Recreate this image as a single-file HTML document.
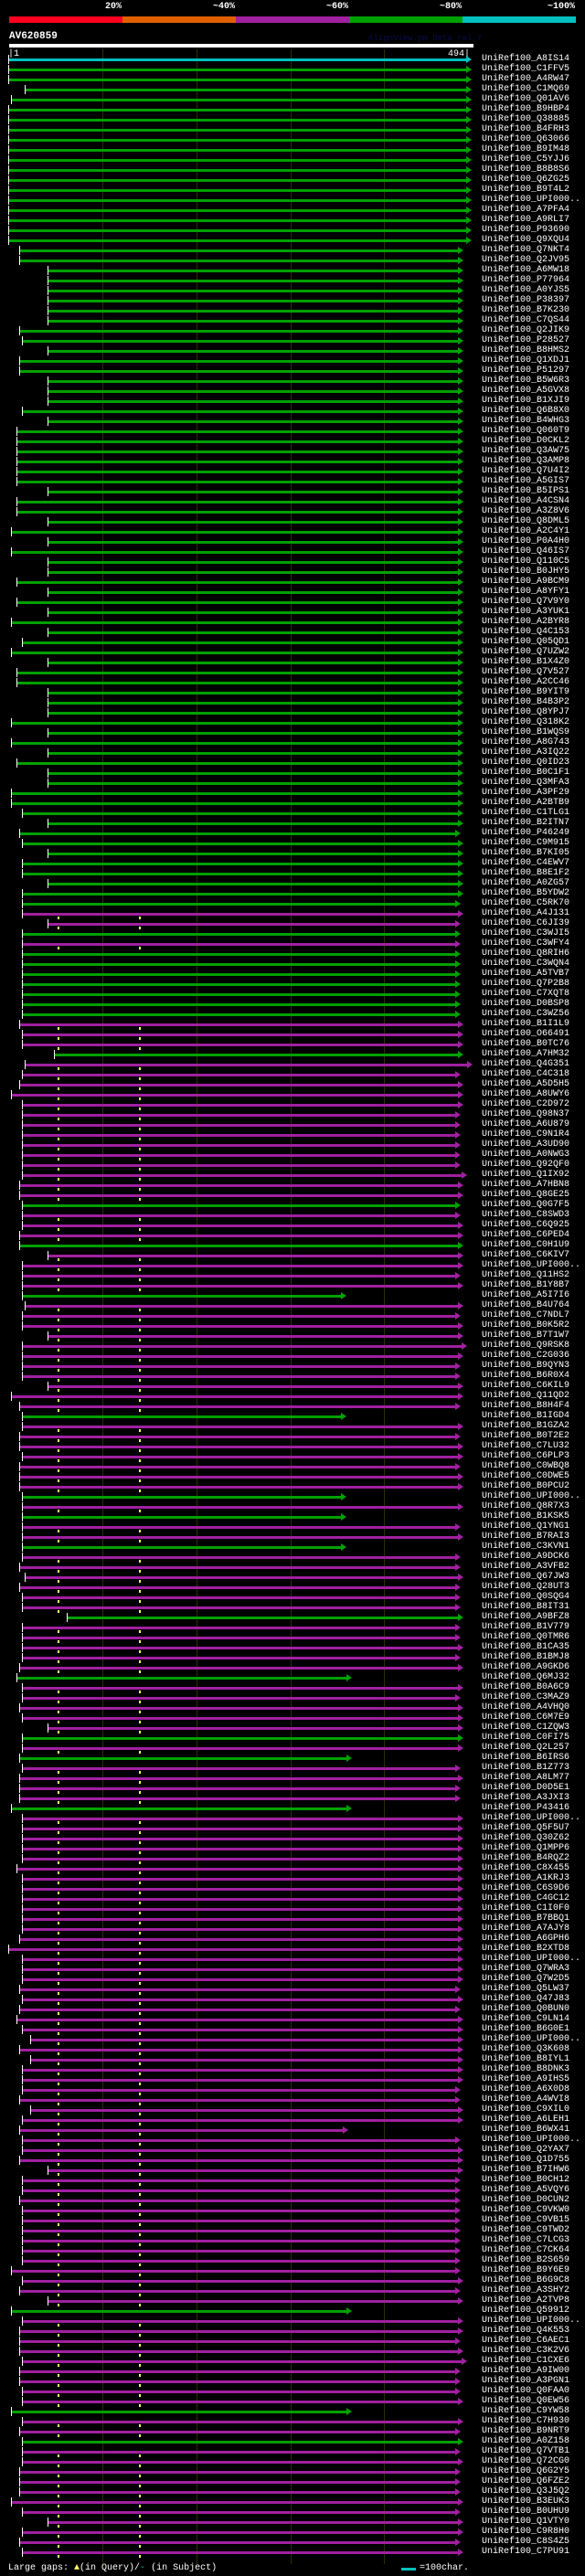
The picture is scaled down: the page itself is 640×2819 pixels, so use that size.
<!DOCTYPE html>
<html><head><meta charset="utf-8"><style>
body{margin:0;background:#000;width:640px;height:2819px;position:relative;overflow:hidden;font-family:"Liberation Mono",monospace}
.a{position:absolute}
.gl{position:absolute;top:54px;height:2752px;width:1px;background:#2e2e00}
.r{position:absolute;left:0;width:640px;height:11px}
.r i{position:absolute;top:5px;height:3px;left:25px;width:476px;background:currentColor}
.r i::before{content:"";position:absolute;left:-1px;top:-4px;width:1px;height:10px;background:#fff}
.r i::after{content:"";position:absolute;left:100%;top:-3px;border-left:6px solid currentColor;border-top:4.5px solid transparent;border-bottom:4.5px solid transparent}
.r span{position:absolute;left:527px;top:0;font-size:10px;line-height:11px;color:#fff;white-space:nowrap}
.g{color:#00a000}.p{color:#a020a0}.c{color:#00c0c0}
.p::before,.p::after{content:"";position:absolute;top:9px;width:2px;height:3px;background:#ffff66}
.p::before{left:63px}.p::after{left:152px}
.pc{font-size:10px;font-weight:bold;color:#fff;line-height:12px}
</style></head><body>
<div class="a pc" style="left:100px;top:2px;width:33px;text-align:right">20%</div>
<div class="a pc" style="left:200px;top:2px;width:57px;text-align:right">~40%</div>
<div class="a pc" style="left:320px;top:2px;width:61px;text-align:right">~60%</div>
<div class="a pc" style="left:440px;top:2px;width:65px;text-align:right">~80%</div>
<div class="a pc" style="left:560px;top:2px;width:69px;text-align:right">~100%</div>
<div class="a" style="left:10px;top:18px;width:124px;height:7px;background:#ff0020"></div>
<div class="a" style="left:134px;top:18px;width:124px;height:7px;background:#e06000"></div>
<div class="a" style="left:258px;top:18px;width:124px;height:7px;background:#a020a0"></div>
<div class="a" style="left:382px;top:18px;width:124px;height:7px;background:#00a000"></div>
<div class="a" style="left:506px;top:18px;width:124px;height:7px;background:#00c0c0"></div>
<div class="a pc" style="left:10px;top:34px;font-size:11px">AV620859</div>
<div class="a" style="left:403px;top:37px;font-size:9px;color:#0a0a4a">AlignView.pm Beta rel.7</div>
<div class="a" style="left:10px;top:48px;width:508px;height:4px;background:#fff"></div>
<div class="a" style="left:9px;top:54px;font-size:10px;color:#fff;line-height:12px">|1</div>
<div class="a" style="left:490px;top:54px;font-size:10px;color:#fff;line-height:12px">494|</div>
<div class="gl" style="left:112px"></div><div class="gl" style="left:215px"></div><div class="gl" style="left:318px"></div><div class="gl" style="left:420px"></div>

<div class="r c" style="top:59px"><i style="left:10px;width:500px"></i><span>UniRef100_A8IS14</span></div>
<div class="r g" style="top:70px"><i style="left:10px;width:500px"></i><span>UniRef100_C1FFV5</span></div>
<div class="r g" style="top:81px"><i style="left:10px;width:500px"></i><span>UniRef100_A4RW47</span></div>
<div class="r g" style="top:92px"><i style="left:28px;width:482px"></i><span>UniRef100_C1MQ69</span></div>
<div class="r g" style="top:103px"><i style="left:13px;width:497px"></i><span>UniRef100_Q01AV6</span></div>
<div class="r g" style="top:114px"><i style="left:10px;width:500px"></i><span>UniRef100_B9HBP4</span></div>
<div class="r g" style="top:125px"><i style="left:10px;width:500px"></i><span>UniRef100_Q38885</span></div>
<div class="r g" style="top:136px"><i style="left:10px;width:500px"></i><span>UniRef100_B4FRH3</span></div>
<div class="r g" style="top:147px"><i style="left:10px;width:500px"></i><span>UniRef100_Q63066</span></div>
<div class="r g" style="top:158px"><i style="left:10px;width:500px"></i><span>UniRef100_B9IM48</span></div>
<div class="r g" style="top:169px"><i style="left:10px;width:500px"></i><span>UniRef100_C5YJJ6</span></div>
<div class="r g" style="top:180px"><i style="left:10px;width:500px"></i><span>UniRef100_B8B8S6</span></div>
<div class="r g" style="top:191px"><i style="left:10px;width:500px"></i><span>UniRef100_Q6ZG25</span></div>
<div class="r g" style="top:202px"><i style="left:10px;width:500px"></i><span>UniRef100_B9T4L2</span></div>
<div class="r g" style="top:213px"><i style="left:10px;width:500px"></i><span>UniRef100_UPI000..</span></div>
<div class="r g" style="top:224px"><i style="left:10px;width:500px"></i><span>UniRef100_A7PFA4</span></div>
<div class="r g" style="top:235px"><i style="left:10px;width:500px"></i><span>UniRef100_A9RLI7</span></div>
<div class="r g" style="top:246px"><i style="left:10px;width:500px"></i><span>UniRef100_P93690</span></div>
<div class="r g" style="top:257px"><i style="left:10px;width:500px"></i><span>UniRef100_Q9XQU4</span></div>
<div class="r g" style="top:268px"><i style="left:22px;width:479px"></i><span>UniRef100_Q7NKT4</span></div>
<div class="r g" style="top:279px"><i style="left:22px;width:479px"></i><span>UniRef100_Q2JV95</span></div>
<div class="r g" style="top:290px"><i style="left:53px;width:448px"></i><span>UniRef100_A6MW18</span></div>
<div class="r g" style="top:301px"><i style="left:53px;width:448px"></i><span>UniRef100_P77964</span></div>
<div class="r g" style="top:312px"><i style="left:53px;width:448px"></i><span>UniRef100_A0YJS5</span></div>
<div class="r g" style="top:323px"><i style="left:53px;width:448px"></i><span>UniRef100_P38397</span></div>
<div class="r g" style="top:334px"><i style="left:53px;width:448px"></i><span>UniRef100_B7K230</span></div>
<div class="r g" style="top:345px"><i style="left:53px;width:448px"></i><span>UniRef100_C7QS44</span></div>
<div class="r g" style="top:356px"><i style="left:22px;width:479px"></i><span>UniRef100_Q2JIK9</span></div>
<div class="r g" style="top:367px"><i></i><span>UniRef100_P28527</span></div>
<div class="r g" style="top:378px"><i style="left:53px;width:448px"></i><span>UniRef100_B8HMS2</span></div>
<div class="r g" style="top:389px"><i style="left:22px;width:479px"></i><span>UniRef100_Q1XDJ1</span></div>
<div class="r g" style="top:400px"><i style="left:22px;width:479px"></i><span>UniRef100_P51297</span></div>
<div class="r g" style="top:411px"><i style="left:53px;width:448px"></i><span>UniRef100_B5W6R3</span></div>
<div class="r g" style="top:422px"><i style="left:53px;width:448px"></i><span>UniRef100_A5GVX8</span></div>
<div class="r g" style="top:433px"><i style="left:53px;width:448px"></i><span>UniRef100_B1XJI9</span></div>
<div class="r g" style="top:444px"><i></i><span>UniRef100_Q6B8X0</span></div>
<div class="r g" style="top:455px"><i style="left:53px;width:448px"></i><span>UniRef100_B4WHG3</span></div>
<div class="r g" style="top:466px"><i style="left:19px;width:482px"></i><span>UniRef100_Q060T9</span></div>
<div class="r g" style="top:477px"><i style="left:19px;width:482px"></i><span>UniRef100_D0CKL2</span></div>
<div class="r g" style="top:488px"><i style="left:19px;width:482px"></i><span>UniRef100_Q3AW75</span></div>
<div class="r g" style="top:499px"><i style="left:19px;width:482px"></i><span>UniRef100_Q3AMP8</span></div>
<div class="r g" style="top:510px"><i style="left:19px;width:482px"></i><span>UniRef100_Q7U4I2</span></div>
<div class="r g" style="top:521px"><i style="left:19px;width:482px"></i><span>UniRef100_A5GIS7</span></div>
<div class="r g" style="top:532px"><i style="left:53px;width:448px"></i><span>UniRef100_B5IPS1</span></div>
<div class="r g" style="top:543px"><i style="left:19px;width:482px"></i><span>UniRef100_A4CSN4</span></div>
<div class="r g" style="top:554px"><i style="left:19px;width:482px"></i><span>UniRef100_A3Z8V6</span></div>
<div class="r g" style="top:565px"><i style="left:53px;width:448px"></i><span>UniRef100_Q8DML5</span></div>
<div class="r g" style="top:576px"><i style="left:13px;width:488px"></i><span>UniRef100_A2C4Y1</span></div>
<div class="r g" style="top:587px"><i style="left:53px;width:448px"></i><span>UniRef100_P0A4H0</span></div>
<div class="r g" style="top:598px"><i style="left:13px;width:488px"></i><span>UniRef100_Q46IS7</span></div>
<div class="r g" style="top:609px"><i style="left:53px;width:448px"></i><span>UniRef100_Q110C5</span></div>
<div class="r g" style="top:620px"><i style="left:53px;width:448px"></i><span>UniRef100_B0JHY5</span></div>
<div class="r g" style="top:631px"><i style="left:19px;width:482px"></i><span>UniRef100_A9BCM9</span></div>
<div class="r g" style="top:642px"><i style="left:53px;width:448px"></i><span>UniRef100_A8YFY1</span></div>
<div class="r g" style="top:653px"><i style="left:19px;width:482px"></i><span>UniRef100_Q7V9Y0</span></div>
<div class="r g" style="top:664px"><i style="left:53px;width:448px"></i><span>UniRef100_A3YUK1</span></div>
<div class="r g" style="top:675px"><i style="left:13px;width:488px"></i><span>UniRef100_A2BYR8</span></div>
<div class="r g" style="top:686px"><i style="left:53px;width:448px"></i><span>UniRef100_Q4C153</span></div>
<div class="r g" style="top:697px"><i></i><span>UniRef100_Q05QD1</span></div>
<div class="r g" style="top:708px"><i style="left:13px;width:488px"></i><span>UniRef100_Q7UZW2</span></div>
<div class="r g" style="top:719px"><i style="left:53px;width:448px"></i><span>UniRef100_B1X4Z0</span></div>
<div class="r g" style="top:730px"><i style="left:19px;width:482px"></i><span>UniRef100_Q7V527</span></div>
<div class="r g" style="top:741px"><i style="left:19px;width:482px"></i><span>UniRef100_A2CC46</span></div>
<div class="r g" style="top:752px"><i style="left:53px;width:448px"></i><span>UniRef100_B9YIT9</span></div>
<div class="r g" style="top:763px"><i style="left:53px;width:448px"></i><span>UniRef100_B4B3P2</span></div>
<div class="r g" style="top:774px"><i style="left:53px;width:448px"></i><span>UniRef100_Q8YPJ7</span></div>
<div class="r g" style="top:785px"><i style="left:13px;width:488px"></i><span>UniRef100_Q318K2</span></div>
<div class="r g" style="top:796px"><i style="left:53px;width:448px"></i><span>UniRef100_B1WQS9</span></div>
<div class="r g" style="top:807px"><i style="left:13px;width:488px"></i><span>UniRef100_A8G743</span></div>
<div class="r g" style="top:818px"><i style="left:53px;width:448px"></i><span>UniRef100_A3IQ22</span></div>
<div class="r g" style="top:829px"><i style="left:19px;width:482px"></i><span>UniRef100_Q0ID23</span></div>
<div class="r g" style="top:840px"><i style="left:53px;width:448px"></i><span>UniRef100_B0C1F1</span></div>
<div class="r g" style="top:851px"><i style="left:53px;width:448px"></i><span>UniRef100_Q3MFA3</span></div>
<div class="r g" style="top:862px"><i style="left:13px;width:488px"></i><span>UniRef100_A3PF29</span></div>
<div class="r g" style="top:873px"><i style="left:13px;width:488px"></i><span>UniRef100_A2BTB9</span></div>
<div class="r g" style="top:884px"><i></i><span>UniRef100_C1TLG1</span></div>
<div class="r g" style="top:895px"><i style="left:53px;width:448px"></i><span>UniRef100_B2ITN7</span></div>
<div class="r g" style="top:906px"><i style="left:22px;width:476px"></i><span>UniRef100_P46249</span></div>
<div class="r g" style="top:917px"><i></i><span>UniRef100_C9M915</span></div>
<div class="r g" style="top:928px"><i style="left:53px;width:448px"></i><span>UniRef100_B7KI05</span></div>
<div class="r g" style="top:939px"><i></i><span>UniRef100_C4EWV7</span></div>
<div class="r g" style="top:950px"><i></i><span>UniRef100_B8E1F2</span></div>
<div class="r g" style="top:961px"><i style="left:53px;width:448px"></i><span>UniRef100_A0ZG57</span></div>
<div class="r g" style="top:972px"><i></i><span>UniRef100_B5YDW2</span></div>
<div class="r g" style="top:983px"><i style="width:473px"></i><span>UniRef100_C5RK70</span></div>
<div class="r p" style="top:994px"><i></i><span>UniRef100_A4J131</span></div>
<div class="r p" style="top:1005px"><i style="left:53px;width:445px"></i><span>UniRef100_C6JI39</span></div>
<div class="r g" style="top:1016px"><i style="width:473px"></i><span>UniRef100_C3WJI5</span></div>
<div class="r p" style="top:1027px"><i style="width:473px"></i><span>UniRef100_C3WFY4</span></div>
<div class="r g" style="top:1038px"><i style="width:473px"></i><span>UniRef100_Q8RIH6</span></div>
<div class="r g" style="top:1049px"><i style="width:473px"></i><span>UniRef100_C3WQN4</span></div>
<div class="r g" style="top:1060px"><i style="width:473px"></i><span>UniRef100_A5TVB7</span></div>
<div class="r g" style="top:1071px"><i style="width:473px"></i><span>UniRef100_Q7P2B8</span></div>
<div class="r g" style="top:1082px"><i style="width:473px"></i><span>UniRef100_C7XQT8</span></div>
<div class="r g" style="top:1093px"><i style="width:473px"></i><span>UniRef100_D0BSP8</span></div>
<div class="r g" style="top:1104px"><i style="width:473px"></i><span>UniRef100_C3WZ56</span></div>
<div class="r p" style="top:1115px"><i style="left:22px;width:479px"></i><span>UniRef100_B1I1L9</span></div>
<div class="r p" style="top:1126px"><i></i><span>UniRef100_O66491</span></div>
<div class="r p" style="top:1137px"><i></i><span>UniRef100_B0TC76</span></div>
<div class="r g" style="top:1148px"><i style="left:60px;width:441px"></i><span>UniRef100_A7HM32</span></div>
<div class="r p" style="top:1159px"><i style="left:28px;width:483px"></i><span>UniRef100_Q4G351</span></div>
<div class="r p" style="top:1170px"><i style="width:473px"></i><span>UniRef100_C4C318</span></div>
<div class="r p" style="top:1181px"><i style="left:22px;width:479px"></i><span>UniRef100_A5D5H5</span></div>
<div class="r p" style="top:1192px"><i style="left:13px;width:488px"></i><span>UniRef100_A8UWY6</span></div>
<div class="r p" style="top:1203px"><i></i><span>UniRef100_C2D972</span></div>
<div class="r p" style="top:1214px"><i style="width:473px"></i><span>UniRef100_Q98N37</span></div>
<div class="r p" style="top:1225px"><i style="width:473px"></i><span>UniRef100_A6U879</span></div>
<div class="r p" style="top:1236px"><i style="width:473px"></i><span>UniRef100_C9N1R4</span></div>
<div class="r p" style="top:1247px"><i style="width:473px"></i><span>UniRef100_A3UD90</span></div>
<div class="r p" style="top:1258px"><i style="width:473px"></i><span>UniRef100_A0NWG3</span></div>
<div class="r p" style="top:1269px"><i style="width:473px"></i><span>UniRef100_Q92QF0</span></div>
<div class="r p" style="top:1280px"><i style="width:480px"></i><span>UniRef100_Q1IX92</span></div>
<div class="r p" style="top:1291px"><i style="left:22px;width:479px"></i><span>UniRef100_A7HBN8</span></div>
<div class="r p" style="top:1302px"><i style="left:22px;width:479px"></i><span>UniRef100_Q8GE25</span></div>
<div class="r g" style="top:1313px"><i style="width:473px"></i><span>UniRef100_Q0G7F5</span></div>
<div class="r p" style="top:1324px"><i style="width:473px"></i><span>UniRef100_C8SWD3</span></div>
<div class="r p" style="top:1335px"><i></i><span>UniRef100_C6Q925</span></div>
<div class="r p" style="top:1346px"><i style="left:22px;width:479px"></i><span>UniRef100_C6PED4</span></div>
<div class="r g" style="top:1357px"><i style="left:22px;width:479px"></i><span>UniRef100_C0H1U9</span></div>
<div class="r p" style="top:1368px"><i style="left:53px;width:448px"></i><span>UniRef100_C6KIV7</span></div>
<div class="r p" style="top:1379px"><i></i><span>UniRef100_UPI000..</span></div>
<div class="r p" style="top:1390px"><i style="width:473px"></i><span>UniRef100_Q11HS2</span></div>
<div class="r p" style="top:1401px"><i></i><span>UniRef100_B1Y8B7</span></div>
<div class="r g" style="top:1412px"><i style="width:348px"></i><span>UniRef100_A5I7I6</span></div>
<div class="r p" style="top:1423px"><i style="left:28px;width:473px"></i><span>UniRef100_B4U764</span></div>
<div class="r p" style="top:1434px"><i style="width:473px"></i><span>UniRef100_C7NDL7</span></div>
<div class="r p" style="top:1445px"><i></i><span>UniRef100_B0K5R2</span></div>
<div class="r p" style="top:1456px"><i style="left:53px;width:448px"></i><span>UniRef100_B7T1W7</span></div>
<div class="r p" style="top:1467px"><i style="width:480px"></i><span>UniRef100_Q9RSK8</span></div>
<div class="r p" style="top:1478px"><i></i><span>UniRef100_C2G036</span></div>
<div class="r p" style="top:1489px"><i style="width:473px"></i><span>UniRef100_B9QYN3</span></div>
<div class="r p" style="top:1500px"><i style="width:473px"></i><span>UniRef100_B6R0X4</span></div>
<div class="r p" style="top:1511px"><i style="left:53px;width:448px"></i><span>UniRef100_C6KIL9</span></div>
<div class="r p" style="top:1522px"><i style="left:13px;width:488px"></i><span>UniRef100_Q11QD2</span></div>
<div class="r p" style="top:1533px"><i style="left:22px;width:476px"></i><span>UniRef100_B8H4F4</span></div>
<div class="r g" style="top:1544px"><i style="width:348px"></i><span>UniRef100_B1IGD4</span></div>
<div class="r p" style="top:1555px"><i></i><span>UniRef100_B1GZA2</span></div>
<div class="r p" style="top:1566px"><i style="left:22px;width:476px"></i><span>UniRef100_B0T2E2</span></div>
<div class="r p" style="top:1577px"><i style="left:22px;width:479px"></i><span>UniRef100_C7LU32</span></div>
<div class="r p" style="top:1588px"><i></i><span>UniRef100_C6PLP3</span></div>
<div class="r p" style="top:1599px"><i style="left:22px;width:476px"></i><span>UniRef100_C0WBQ8</span></div>
<div class="r p" style="top:1610px"><i style="left:22px;width:479px"></i><span>UniRef100_C0DWE5</span></div>
<div class="r p" style="top:1621px"><i style="left:22px;width:479px"></i><span>UniRef100_B0PCU2</span></div>
<div class="r g" style="top:1632px"><i style="width:348px"></i><span>UniRef100_UPI000..</span></div>
<div class="r p" style="top:1643px"><i></i><span>UniRef100_Q8R7X3</span></div>
<div class="r g" style="top:1654px"><i style="width:348px"></i><span>UniRef100_B1KSK5</span></div>
<div class="r p" style="top:1665px"><i style="width:473px"></i><span>UniRef100_Q1YNG1</span></div>
<div class="r p" style="top:1676px"><i></i><span>UniRef100_B7RAI3</span></div>
<div class="r g" style="top:1687px"><i style="width:348px"></i><span>UniRef100_C3KVN1</span></div>
<div class="r p" style="top:1698px"><i style="width:473px"></i><span>UniRef100_A9DCK6</span></div>
<div class="r p" style="top:1709px"><i style="left:22px;width:476px"></i><span>UniRef100_A3VFB2</span></div>
<div class="r p" style="top:1720px"><i style="left:28px;width:473px"></i><span>UniRef100_Q67JW3</span></div>
<div class="r p" style="top:1731px"><i style="left:22px;width:476px"></i><span>UniRef100_Q28UT3</span></div>
<div class="r p" style="top:1742px"><i style="width:473px"></i><span>UniRef100_Q0SQG4</span></div>
<div class="r p" style="top:1753px"><i style="width:473px"></i><span>UniRef100_B8IT31</span></div>
<div class="r g" style="top:1764px"><i style="left:74px;width:427px"></i><span>UniRef100_A9BFZ8</span></div>
<div class="r p" style="top:1775px"><i style="width:473px"></i><span>UniRef100_B1V779</span></div>
<div class="r p" style="top:1786px"><i style="width:473px"></i><span>UniRef100_Q0TMR6</span></div>
<div class="r p" style="top:1797px"><i></i><span>UniRef100_B1CA35</span></div>
<div class="r p" style="top:1808px"><i style="width:473px"></i><span>UniRef100_B1BMJ8</span></div>
<div class="r p" style="top:1819px"><i style="left:22px;width:479px"></i><span>UniRef100_A9GKD6</span></div>
<div class="r g" style="top:1830px"><i style="left:19px;width:360px"></i><span>UniRef100_Q6MJ32</span></div>
<div class="r p" style="top:1841px"><i></i><span>UniRef100_B0A6C9</span></div>
<div class="r p" style="top:1852px"><i style="width:473px"></i><span>UniRef100_C3MAZ9</span></div>
<div class="r p" style="top:1863px"><i style="left:22px;width:479px"></i><span>UniRef100_A4VHQ0</span></div>
<div class="r p" style="top:1874px"><i></i><span>UniRef100_C6M7E9</span></div>
<div class="r p" style="top:1885px"><i style="left:53px;width:448px"></i><span>UniRef100_C1ZQW3</span></div>
<div class="r g" style="top:1896px"><i></i><span>UniRef100_C0FI75</span></div>
<div class="r p" style="top:1907px"><i></i><span>UniRef100_Q2L257</span></div>
<div class="r g" style="top:1918px"><i style="left:22px;width:357px"></i><span>UniRef100_B6IRS6</span></div>
<div class="r p" style="top:1929px"><i style="width:473px"></i><span>UniRef100_B1Z773</span></div>
<div class="r p" style="top:1940px"><i style="left:22px;width:479px"></i><span>UniRef100_A8LM77</span></div>
<div class="r p" style="top:1951px"><i style="left:22px;width:476px"></i><span>UniRef100_D0D5E1</span></div>
<div class="r p" style="top:1962px"><i style="left:22px;width:476px"></i><span>UniRef100_A3JXI3</span></div>
<div class="r g" style="top:1973px"><i style="left:13px;width:366px"></i><span>UniRef100_P43416</span></div>
<div class="r p" style="top:1984px"><i></i><span>UniRef100_UPI000..</span></div>
<div class="r p" style="top:1995px"><i></i><span>UniRef100_Q5F5U7</span></div>
<div class="r p" style="top:2006px"><i></i><span>UniRef100_Q30Z62</span></div>
<div class="r p" style="top:2017px"><i></i><span>UniRef100_Q1MPP6</span></div>
<div class="r p" style="top:2028px"><i></i><span>UniRef100_B4RQZ2</span></div>
<div class="r p" style="top:2039px"><i style="left:19px;width:482px"></i><span>UniRef100_C8X455</span></div>
<div class="r p" style="top:2050px"><i></i><span>UniRef100_A1KRJ3</span></div>
<div class="r p" style="top:2061px"><i></i><span>UniRef100_C6S9D6</span></div>
<div class="r p" style="top:2072px"><i></i><span>UniRef100_C4GC12</span></div>
<div class="r p" style="top:2083px"><i></i><span>UniRef100_C1I0F0</span></div>
<div class="r p" style="top:2094px"><i></i><span>UniRef100_B7BBQ1</span></div>
<div class="r p" style="top:2105px"><i></i><span>UniRef100_A7AJY8</span></div>
<div class="r p" style="top:2116px"><i style="left:22px;width:479px"></i><span>UniRef100_A6GPH6</span></div>
<div class="r p" style="top:2127px"><i style="left:10px;width:491px"></i><span>UniRef100_B2XTD8</span></div>
<div class="r p" style="top:2138px"><i></i><span>UniRef100_UPI000..</span></div>
<div class="r p" style="top:2149px"><i></i><span>UniRef100_Q7WRA3</span></div>
<div class="r p" style="top:2160px"><i></i><span>UniRef100_Q7W2D5</span></div>
<div class="r p" style="top:2171px"><i style="left:22px;width:476px"></i><span>UniRef100_Q5LW37</span></div>
<div class="r p" style="top:2182px"><i></i><span>UniRef100_Q47J83</span></div>
<div class="r p" style="top:2193px"><i style="left:22px;width:476px"></i><span>UniRef100_Q0BUN0</span></div>
<div class="r p" style="top:2204px"><i style="left:19px;width:482px"></i><span>UniRef100_C9LN14</span></div>
<div class="r p" style="top:2215px"><i></i><span>UniRef100_B6G0E1</span></div>
<div class="r p" style="top:2226px"><i style="left:34px;width:467px"></i><span>UniRef100_UPI000..</span></div>
<div class="r p" style="top:2237px"><i style="left:22px;width:479px"></i><span>UniRef100_Q3K608</span></div>
<div class="r p" style="top:2248px"><i style="left:34px;width:467px"></i><span>UniRef100_B8IYL1</span></div>
<div class="r p" style="top:2259px"><i></i><span>UniRef100_B8DNK3</span></div>
<div class="r p" style="top:2270px"><i></i><span>UniRef100_A9IHS5</span></div>
<div class="r p" style="top:2281px"><i style="width:473px"></i><span>UniRef100_A6X0D8</span></div>
<div class="r p" style="top:2292px"><i style="left:22px;width:476px"></i><span>UniRef100_A4WVI8</span></div>
<div class="r p" style="top:2303px"><i style="left:34px;width:467px"></i><span>UniRef100_C9XIL0</span></div>
<div class="r p" style="top:2314px"><i></i><span>UniRef100_A6LEH1</span></div>
<div class="r p" style="top:2325px"><i style="left:22px;width:353px"></i><span>UniRef100_B6WX41</span></div>
<div class="r p" style="top:2336px"><i style="width:473px"></i><span>UniRef100_UPI000..</span></div>
<div class="r p" style="top:2347px"><i></i><span>UniRef100_Q2YAX7</span></div>
<div class="r p" style="top:2358px"><i style="left:22px;width:479px"></i><span>UniRef100_Q1D755</span></div>
<div class="r p" style="top:2369px"><i style="left:53px;width:448px"></i><span>UniRef100_B7IHW6</span></div>
<div class="r p" style="top:2380px"><i style="width:473px"></i><span>UniRef100_B0CH12</span></div>
<div class="r p" style="top:2391px"><i style="width:473px"></i><span>UniRef100_A5VQY6</span></div>
<div class="r p" style="top:2402px"><i style="left:22px;width:476px"></i><span>UniRef100_D0CUN2</span></div>
<div class="r p" style="top:2413px"><i style="width:473px"></i><span>UniRef100_C9VKW0</span></div>
<div class="r p" style="top:2424px"><i style="width:473px"></i><span>UniRef100_C9VB15</span></div>
<div class="r p" style="top:2435px"><i style="width:473px"></i><span>UniRef100_C9TWD2</span></div>
<div class="r p" style="top:2446px"><i style="width:473px"></i><span>UniRef100_C7LCG3</span></div>
<div class="r p" style="top:2457px"><i style="width:473px"></i><span>UniRef100_C7CK64</span></div>
<div class="r p" style="top:2468px"><i style="width:473px"></i><span>UniRef100_B2S659</span></div>
<div class="r p" style="top:2479px"><i style="left:13px;width:485px"></i><span>UniRef100_B9Y6E9</span></div>
<div class="r p" style="top:2490px"><i></i><span>UniRef100_B6G9C8</span></div>
<div class="r p" style="top:2501px"><i style="left:22px;width:476px"></i><span>UniRef100_A3SHY2</span></div>
<div class="r p" style="top:2512px"><i style="left:53px;width:448px"></i><span>UniRef100_A2TVP8</span></div>
<div class="r g" style="top:2523px"><i style="left:13px;width:366px"></i><span>UniRef100_Q59912</span></div>
<div class="r p" style="top:2534px"><i></i><span>UniRef100_UPI000..</span></div>
<div class="r p" style="top:2545px"><i style="left:22px;width:479px"></i><span>UniRef100_Q4K553</span></div>
<div class="r p" style="top:2556px"><i style="left:22px;width:476px"></i><span>UniRef100_C6AEC1</span></div>
<div class="r p" style="top:2567px"><i style="left:22px;width:479px"></i><span>UniRef100_C3K2V6</span></div>
<div class="r p" style="top:2578px"><i style="width:480px"></i><span>UniRef100_C1CXE6</span></div>
<div class="r p" style="top:2589px"><i style="left:22px;width:476px"></i><span>UniRef100_A9IW00</span></div>
<div class="r p" style="top:2600px"><i style="left:22px;width:476px"></i><span>UniRef100_A3PGN1</span></div>
<div class="r p" style="top:2611px"><i style="width:473px"></i><span>UniRef100_Q0FAA0</span></div>
<div class="r p" style="top:2622px"><i></i><span>UniRef100_Q0EW56</span></div>
<div class="r g" style="top:2633px"><i style="left:13px;width:366px"></i><span>UniRef100_C9YW58</span></div>
<div class="r p" style="top:2644px"><i></i><span>UniRef100_C7H930</span></div>
<div class="r p" style="top:2655px"><i style="left:22px;width:476px"></i><span>UniRef100_B9NRT9</span></div>
<div class="r g" style="top:2666px"><i></i><span>UniRef100_A0Z158</span></div>
<div class="r p" style="top:2677px"><i style="width:473px"></i><span>UniRef100_Q7VTB1</span></div>
<div class="r p" style="top:2688px"><i></i><span>UniRef100_Q72CG0</span></div>
<div class="r p" style="top:2699px"><i style="left:22px;width:476px"></i><span>UniRef100_Q6G2Y5</span></div>
<div class="r p" style="top:2710px"><i style="left:22px;width:476px"></i><span>UniRef100_Q6FZE2</span></div>
<div class="r p" style="top:2721px"><i style="left:22px;width:476px"></i><span>UniRef100_Q3J5Q2</span></div>
<div class="r p" style="top:2732px"><i style="left:13px;width:488px"></i><span>UniRef100_B3EUK3</span></div>
<div class="r p" style="top:2743px"><i style="width:473px"></i><span>UniRef100_B0UHU9</span></div>
<div class="r p" style="top:2754px"><i style="left:53px;width:448px"></i><span>UniRef100_Q1VTY0</span></div>
<div class="r p" style="top:2765px"><i></i><span>UniRef100_C9R8H0</span></div>
<div class="r p" style="top:2776px"><i style="left:22px;width:476px"></i><span>UniRef100_C8S4Z5</span></div>
<div class="r p" style="top:2787px"><i></i><span>UniRef100_C7PU91</span></div>

<div class="a" style="left:9px;top:2805px;font-size:10px;line-height:12px;color:#fff;white-space:nowrap">Large gaps: <span style="color:#ffff66">&#9650;</span>(in Query)/<span style="color:#00c0c0">-</span> (in Subject)</div>
<div class="a" style="left:439px;top:2810px;width:16px;height:3px;background:#00c0c0"></div>
<div class="a" style="left:459px;top:2805px;font-size:10px;line-height:12px;color:#fff">=100char.</div>
</body></html>
